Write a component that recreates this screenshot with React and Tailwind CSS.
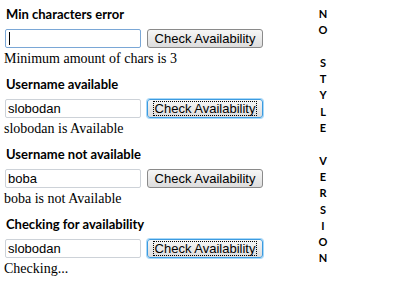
const sections = [
	{title: 'Min characters error', value: '', msg: 'Minimum amount of chars is 3', inputFocus: true, btnFocus: false},
	{title: 'Username available', value: 'slobodan', msg: 'slobodan is Available', inputFocus: false, btnFocus: true},
	{title: 'Username not available', value: 'boba', msg: 'boba is not Available', inputFocus: false, btnFocus: false},
	{title: 'Checking for availability', value: 'slobodan', msg: 'Checking...', inputFocus: false, btnFocus: true},
];

const letters = ['N', 'O', '', 'S', 'T', 'Y', 'L', 'E', '', 'V', 'E', 'R', 'S', 'I', 'O', 'N'];

const Section = ({title, value, msg, inputFocus, btnFocus}) => (
	<div className="flex flex-col">
		<h3 className="font-['Lato',sans-serif] font-bold text-[13px] leading-[16px] h-[16px] text-black pl-[1px]">{title}</h3>
		<div className="flex items-center gap-[6px] mt-[7px] h-[19px]">
			<div
				className={`w-[136px] h-[19px] border rounded-[2px] flex items-center px-[2px] font-['Liberation_Sans',sans-serif] text-[13px] text-black ${
					inputFocus ? 'border-[#7aa7d6]' : 'border-[#cdd2d8]'
				}`}
			>
				{inputFocus ? <span className="w-px h-[13px] bg-black ml-[1px]"></span> : value}
			</div>
			<button
				className={`h-[19px] w-[116px] rounded-[3px] border bg-gradient-to-b from-[#f6f6f6] to-[#dddddd] font-['Liberation_Sans',sans-serif] text-[13px] text-black leading-none flex items-center justify-center ${
					btnFocus ? 'border-[#3c9be0] shadow-[0_0_0_1px_#a8d8f8]' : 'border-[#8a8a8a]'
				}`}
			>
				<span className={btnFocus ? 'outline-1 outline-dotted outline-black px-[1px]' : ''}>Check Availability</span>
			</button>
		</div>
		<p className="font-['Liberation_Serif',serif] text-[14px] leading-[16px] h-[16px] text-black mt-[3px] -ml-[1px]">{msg}</p>
	</div>
);

const App = () => {
	return (
		<div className="w-[400px] h-[288px] bg-white flex overflow-hidden">
			<div className="w-[300px] flex flex-col gap-[9px] pt-[6px] pl-[5px]">
				{sections.map((s) => (
					<Section key={s.title} {...s} />
				))}
			</div>
			<div className="flex-1 flex flex-col pt-[6px] pl-[18px]">
				{letters.map((l, i) => (
					<div key={i} className="font-['Lato',sans-serif] font-bold text-[11px] leading-[16.3px] h-[16.3px] text-black w-[10px] text-center">
						{l}
					</div>
				))}
			</div>
		</div>
	);
};

export default App;
